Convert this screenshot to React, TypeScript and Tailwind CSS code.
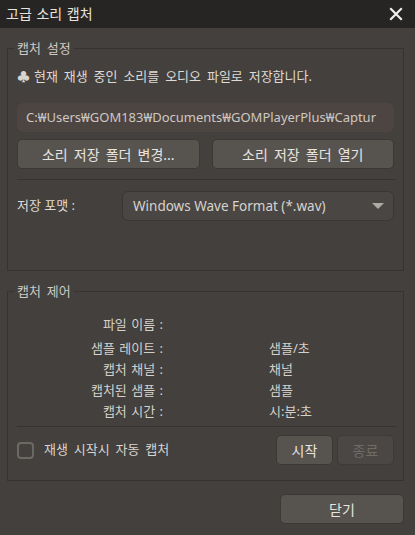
import React from "react";

const font = { fontFamily: '"Noto Sans", "Noto Sans CJK KR", sans-serif' };

function Btn({ children, className = "", disabled = false }: { children: React.ReactNode; className?: string; disabled?: boolean }) {
  return (
    <div
      className={
        "flex items-center justify-center rounded-[5px] border text-[14px] " +
        (disabled
          ? "bg-[#4a4744] border-[#3d3a37] text-[#6f6b67] "
          : "bg-[#57544f] border-[#3b3936] text-[#e8e4e0] ") +
        className
      }
    >
      {children}
    </div>
  );
}

export default function App() {
  return (
    <div className="w-[415px] h-[535px] bg-[#43403d] flex flex-col overflow-hidden [word-spacing:2.5px]" style={font}>
      <div className="h-[28px] bg-[#272523] flex items-center justify-between pl-[6px] pr-[12px] shrink-0">
        <span className="text-[14px] text-[#e6e2de] leading-none [word-spacing:1px]">고급 소리 캡처</span>
        <svg width="14" height="14" viewBox="0 0 14 14">
          <path d="M2 2 L12 12 M12 2 L2 12" stroke="#f0eeec" strokeWidth="2.2" strokeLinecap="square" />
        </svg>
      </div>

      <div className="flex flex-col pl-[7px] pr-[11px]">
        <fieldset className="min-w-0 mt-[12px] border border-[#363431] pl-[9px] pr-[9px] pb-[49px]">
          <legend className="ml-[-3px] px-[3px] text-[13px] leading-[16px] text-[#cdc9c5]">캡처 설정</legend>
          <div className="mt-[11px] h-[20px] flex items-center text-[13px] text-[#dedad6]">
            <span className="w-[17px] text-[13px] text-[#d8d4d0]">♣</span>
            <span>현재 재생 중인 소리를 오디오 파일로 저장합니다.</span>
          </div>
          <div className="mt-[16px] h-[29px] rounded-[6px] bg-[#4d4541] flex items-center pl-[9px] overflow-hidden whitespace-nowrap text-[13px] text-[#cfc8c1] [word-spacing:0px]">
            C:₩Users₩GOM183₩Documents₩GOMPlayerPlus₩Captur
          </div>
          <div className="mt-[7px] flex gap-[12px]">
            <Btn className="h-[30px] flex-1">소리 저장 폴더 변경...</Btn>
            <Btn className="h-[30px] flex-1">소리 저장 폴더 열기</Btn>
          </div>
          <div className="mt-[10px] h-px bg-[#363431] mr-[-2px]" />
          <div className="mt-[11px] flex items-center">
            <span className="w-[105px] text-[13px] text-[#dedad6] [word-spacing:0px]">저장 포맷 :</span>
            <div className="flex-1 h-[30px] rounded-[6px] bg-[#4a4643] border border-[#3a3734] flex items-center justify-between pl-[10px] pr-[9px]">
              <span className="text-[13.5px] text-[#d6d2ce] [word-spacing:0px]">Windows Wave Format (*.wav)</span>
              <svg width="12" height="7" viewBox="0 0 12 7">
                <path d="M0 0 H12 L6 6 Z" fill="#aeaaa5" />
              </svg>
            </div>
          </div>
        </fieldset>

        <fieldset className="min-w-0 mt-[12px] border border-[#363431] pl-[9px] pr-[9px] pb-[15px]">
          <legend className="ml-[-3px] px-[3px] text-[13px] leading-[16px] text-[#cdc9c5]">캡처 제어</legend>
          <div className="mt-[15px] grid grid-cols-[146px_1fr] gap-x-[106px] text-[13px] text-[#d4d0cc] [word-spacing:1px]">
            <span className="h-[21px] mb-[3px] text-right leading-[21px]">파일 이름 :</span>
            <span className="h-[21px] mb-[3px] leading-[21px]"></span>
            <span className="h-[21px] text-right leading-[21px]">샘플 레이트 :</span>
            <span className="h-[21px] leading-[21px]">샘플/초</span>
            <span className="h-[21px] text-right leading-[21px]">캡처 채널 :</span>
            <span className="h-[21px] leading-[21px]">채널</span>
            <span className="h-[21px] text-right leading-[21px]">캡처된 샘플 :</span>
            <span className="h-[21px] leading-[21px]">샘플</span>
            <span className="h-[21px] text-right leading-[21px]">캡처 시간 :</span>
            <span className="h-[21px] leading-[21px]">시:분:초</span>
          </div>
          <div className="mt-[4px] h-px bg-[#363431] mr-[-2px]" />
          <div className="mt-[8px] flex items-center">
            <div className="w-[17px] h-[17px] rounded-[4px] border-2 border-[#6c6864]" />
            <span className="ml-[10px] text-[13px] text-[#d8d4d0]">재생 시작시 자동 캡처</span>
            <div className="flex-1" />
            <Btn className="h-[30px] w-[57px]">시작</Btn>
            <Btn disabled className="h-[30px] w-[57px] ml-[4px]">종료</Btn>
          </div>
        </fieldset>

        <div className="mt-[13px] flex justify-end">
          <Btn className="h-[30px] w-[124px]">닫기</Btn>
        </div>
      </div>
    </div>
  );
}
